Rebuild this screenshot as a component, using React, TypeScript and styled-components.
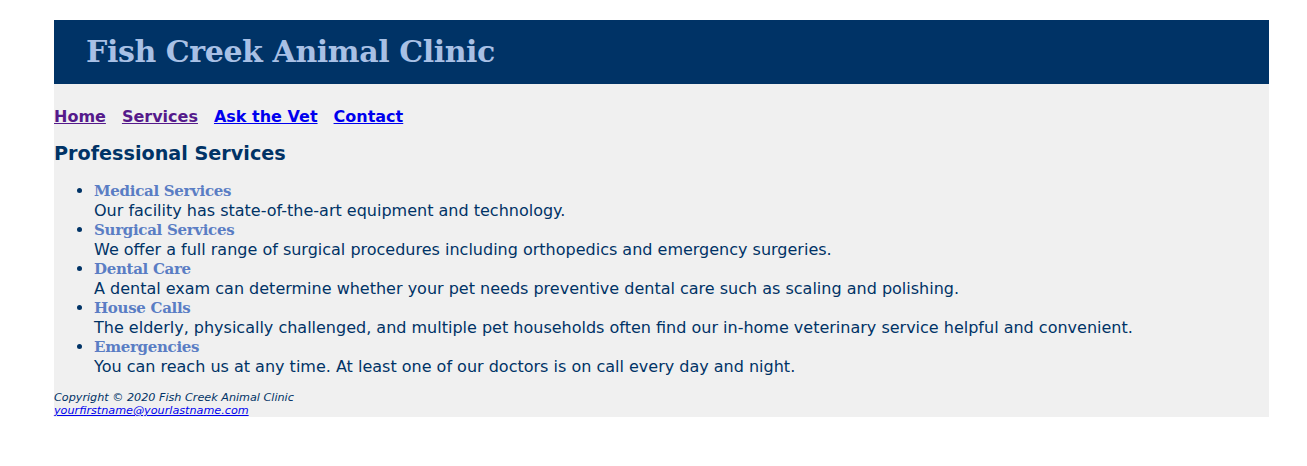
import React from "react";
import styled, { createGlobalStyle } from "styled-components";

const Global = createGlobalStyle`
  html, body { margin: 0; padding: 0; background: #ffffff; }
  body { padding: 20px 0 0 54px; font-family: Verdana, "DejaVu Sans", sans-serif; }
`;

const Wrapper = styled.div`
  width: 1215px;
  background: #f0f0f0;
  color: #003366;
`;

const Header = styled.header`
  background: #003366;
  color: #a8c0e5;
  padding-left: 32px;
`;

const Title = styled.h1`
  margin: 0;
  font-family: Georgia, "DejaVu Serif", serif;
  font-weight: bold;
  font-size: 30px;
  letter-spacing: -0.4px;
  line-height: 64px;
`;

const Nav = styled.nav`
  display: flex;
  gap: 16px;
  padding-top: 23px;
  font-weight: bold;
  font-size: 16px;
  line-height: 19px;
`;

const NavLink = styled.a<{ $visited?: boolean }>`
  color: ${(p) => (p.$visited ? "#551a8b" : "#0000ee")};
  text-decoration: underline;
`;

const Heading = styled.h2`
  margin: 16px 0 17px;
  font-size: 19.2px;
  line-height: 23px;
  font-weight: bold;
  color: #003366;
`;

const List = styled.ul`
  margin: 0;
  padding-left: 40px;
  font-size: 16px;
  line-height: 18px;
`;

const Item = styled.li``;

const ItemTitle = styled.span`
  display: block;
  font-family: Georgia, "DejaVu Serif", serif;
  font-weight: bold;
  font-size: 15px;
  letter-spacing: -0.3px;
  line-height: 19px;
  color: #5a7dc4;
`;

const ItemText = styled.span`
  display: block;
  line-height: 20px;
`;

const Footer = styled.footer`
  padding-top: 14px;
  font-size: 11.2px;
  line-height: 13px;
  font-style: italic;
`;

const Mail = styled.a`
  display: block;
  color: #0000ee;
  text-decoration: underline;
`;

const services = [
  ["Medical Services", "Our facility has state-of-the-art equipment and technology."],
  ["Surgical Services", "We offer a full range of surgical procedures including orthopedics and emergency surgeries."],
  ["Dental Care", "A dental exam can determine whether your pet needs preventive dental care such as scaling and polishing."],
  ["House Calls", "The elderly, physically challenged, and multiple pet households often find our in-home veterinary service helpful and convenient."],
  ["Emergencies", "You can reach us at any time. At least one of our doctors is on call every day and night."],
];

export default function App() {
  return (
    <>
      <Global />
      <Wrapper>
        <Header>
          <Title>Fish Creek Animal Clinic</Title>
        </Header>
        <Nav>
          <NavLink $visited href="#">Home</NavLink>
          <NavLink $visited href="#">Services</NavLink>
          <NavLink href="#">Ask the Vet</NavLink>
          <NavLink href="#">Contact</NavLink>
        </Nav>
        <Heading>Professional Services</Heading>
        <List>
          {services.map(([t, d]) => (
            <Item key={t}>
              <ItemTitle>{t}</ItemTitle>
              <ItemText>{d}</ItemText>
            </Item>
          ))}
        </List>
        <Footer>
          <div>Copyright &copy; 2020 Fish Creek Animal Clinic</div>
          <Mail href="#">yourfirstname@yourlastname.com</Mail>
        </Footer>
      </Wrapper>
    </>
  );
}
